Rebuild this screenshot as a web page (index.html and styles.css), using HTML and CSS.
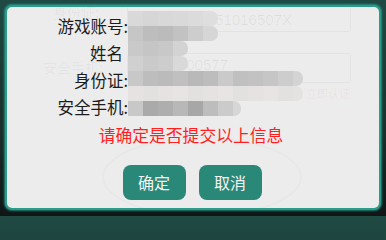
FILE: index.html
```html
<!DOCTYPE html>
<html lang="zh-CN">
<head>
<meta charset="utf-8">
<title>确认信息</title>
<link rel="stylesheet" href="styles.css">
</head>
<body>
<div class="frame">
  <div class="card">
    <div class="ghost" aria-hidden="true">
      <div class="g-box g-box1"></div>
      <div class="g-box g-box2"></div>
      <span class="g-text g-id-label">身份证:</span>
      <span class="g-text g-phone-label">安全手机:</span>
      <span class="g-num g-id">440300351016507X</span>
      <span class="g-num g-phone">1380000577</span>
      <span class="g-red">立即认证</span>
      <div class="g-ring"></div>
    </div>
    <div class="content">
      <div class="info">
        <div class="labels">
          <div class="label">游戏账号:</div>
          <div class="label label-nocolon">姓名</div>
          <div class="label">身份证:</div>
          <div class="label">安全手机:</div>
        </div>
        <div class="mosaic">
          <div class="mrow"><span class="b a1"></span><span class="b a2"></span><span class="b a3"></span><span class="b a1"></span><span class="b a4"></span><span class="b a5 end"></span></div>
          <div class="mrow"><span class="b b1"></span><span class="b b2"></span><span class="b b3"></span><span class="b b4"></span><span class="b b5"></span><span class="b b6 end"></span></div>
          <div class="mrow"><span class="b c1"></span><span class="b c2"></span><span class="b c3"></span><span class="b c4 end"></span></div>
          <div class="mrow"><span class="b d1"></span><span class="b d2"></span><span class="b d3"></span><span class="b d4 end"></span></div>
          <div class="mrow"><span class="b e1"></span><span class="b e2"></span><span class="b e3"></span><span class="b e4"></span><span class="b e5"></span><span class="b e2"></span><span class="b e6"></span><span class="b e4"></span><span class="b e7"></span><span class="b e8"></span><span class="b e9"></span><span class="b e10 end short"></span></div>
          <div class="mrow"><span class="b f1"></span><span class="b f2"></span><span class="b f1"></span><span class="b f3"></span><span class="b f2"></span><span class="b f1"></span><span class="b f3"></span><span class="b f2"></span><span class="b f1"></span><span class="b f3"></span><span class="b f2"></span><span class="b f1 end short"></span></div>
          <div class="mrow"><span class="b g1"></span><span class="b g2"></span><span class="b g3"></span><span class="b g4"></span><span class="b g5"></span><span class="b g6"></span><span class="b g7"></span><span class="b g8 end tiny"></span></div>
        </div>
      </div>
      <p class="notice">请确定是否提交以上信息</p>
      <div class="actions">
        <button class="btn" type="button">确定</button>
        <button class="btn" type="button">取消</button>
      </div>
    </div>
  </div>
</div>
</body>
</html>
```

FILE: styles.css
```css
* { box-sizing: border-box; }

html, body {
  margin: 0;
  padding: 0;
  width: 386px;
  height: 216px;
  overflow: hidden;
}

body {
  background: linear-gradient(180deg, #1f4a43 0%, #1a2f2c 60%, #101615 100%);
  font-family: "Noto Sans CJK SC", "Noto Sans", sans-serif;
}

.frame {
  padding: 5px 5px 6px 5px;
  height: 216px;
}

.card {
  position: relative;
  height: 205px;
  background: #ececec;
  border: 2px solid #2a9c8a;
  border-radius: 7px;
  box-shadow: 0 0 2px 1px rgba(42, 170, 150, 0.7);
  overflow: hidden;
}

/* faded previous screen underneath */
.ghost {
  position: absolute;
  inset: 0;
  z-index: 0;
  pointer-events: none;
}
.g-box {
  position: absolute;
  left: 120px;
  width: 224px;
  border: 1px solid rgba(0, 0, 0, 0.035);
  border-radius: 3px;
}
.g-box1 { top: -6px; height: 31px; }
.g-box2 { top: 46px; height: 30px; }
.g-text {
  position: absolute;
  font-size: 14px;
  line-height: 12px;
  color: rgba(0, 0, 0, 0.045);
}
.g-id-label { left: 46px; top: -1px; }
.g-phone-label { left: 36px; top: 54px; }
.g-num {
  position: absolute;
  font-family: "Liberation Sans", Arial, sans-serif;
  font-size: 15px;
  line-height: 13px;
  color: rgba(0, 0, 0, 0.06);
}
.g-id { right: 87px; top: 6px; }
.g-phone { right: 151px; top: 51px; }
.g-red {
  position: absolute;
  left: 299px;
  top: 81px;
  font-size: 11px;
  line-height: 11px;
  color: rgba(255, 40, 40, 0.07);
}
.g-ring {
  position: absolute;
  left: 95px;
  top: 130px;
  width: 200px;
  height: 80px;
  border-radius: 50%;
  border: 2px solid rgba(0, 0, 0, 0.02);
}

.content {
  position: relative;
  z-index: 1;
  padding-top: 6px;
}

.info {
  display: flex;
  align-items: flex-start;
}

.labels {
  width: 121px;
  flex: none;
}
.label {
  text-align: right;
  font-size: 16.5px;
  line-height: 27px;
  height: 27px;
  color: #1c1c1c;
}
.label-nocolon { padding-right: 5px; }

.mosaic {
  margin-top: -2px;
  filter: blur(0.7px);
}
.mrow {
  display: flex;
  height: 15px;
}
.b {
  display: block;
  width: 15px;
  height: 15px;
}
.b.short { width: 10px; }
.b.tiny { width: 8px; }
.b.end { border-radius: 0 7px 7px 0; }

.a1 { background: #d9d9d9; }
.a2 { background: #d6d6d6; }
.a3 { background: #d8d8d8; }
.a4 { background: #dbdbdb; }
.a5 { background: #dedede; }

.b1 { background: #c6c6c6; }
.b2 { background: #bdbdbd; }
.b3 { background: #bbbbbb; }
.b4 { background: #c2c2c2; }
.b5 { background: #cdcdcd; }
.b6 { background: #d6d6d6; }

.c1 { background: #c9c9c9; }
.c2 { background: #c5c5c5; }
.c3 { background: #c8c8c8; }
.c4 { background: #d3d3d3; }

.d1 { background: #d0d0d0; }
.d2 { background: #cacaca; }
.d3 { background: #cdcdcd; }
.d4 { background: #d9d9d9; }

.e1 { background: #c8c8c8; }
.e2 { background: #bdbdbd; }
.e3 { background: #bbbbbb; }
.e4 { background: #c0c0c0; }
.e5 { background: #b9b9b9; }
.e6 { background: #cacaca; }
.e7 { background: #c2c2c2; }
.e8 { background: #c6c6c6; }
.e9 { background: #cdcdcd; }
.e10 { background: #d4d4d4; }

.f1 { background: #e6e2e2; }
.f2 { background: #e3e0e0; }
.f3 { background: #e8e4e4; }

.g1 { background: #c8c8c8; }
.g2 { background: #aaaaaa; }
.g3 { background: #aeaeae; }
.g4 { background: #b8b8b8; }
.g5 { background: #a7a7a7; }
.g6 { background: #bdbdbd; }
.g7 { background: #cbcbcb; }
.g8 { background: #d6d6d6; }

.notice {
  margin: 1px 0 0 0;
  text-align: center;
  padding-right: 4px;
  font-size: 16.8px;
  line-height: 27px;
  color: #ff1f1f;
}

.actions {
  display: flex;
  justify-content: center;
  gap: 13px;
  margin-top: 16px;
  padding-right: 2px;
}

.btn {
  width: 63px;
  height: 35px;
  border: none;
  border-radius: 8px;
  background: #2a8878;
  color: #f4f4f4;
  font-family: "Noto Sans CJK SC", "Noto Sans", sans-serif;
  font-size: 16px;
  line-height: 35px;
  padding: 0;
}
```
